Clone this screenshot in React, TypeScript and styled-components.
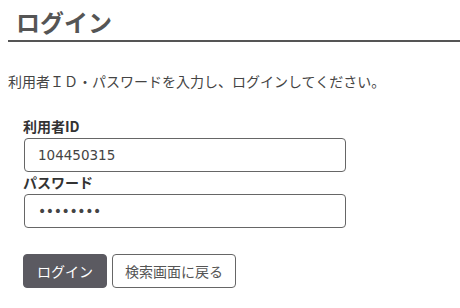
import React from "react";
import styled, { createGlobalStyle } from "styled-components";

const Global = createGlobalStyle`
  html, body { margin: 0; padding: 0; background: #fff; }
  body { font-family: "Noto Sans CJK JP", "Noto Sans", sans-serif; color: #333; }
`;

const Page = styled.div`
  padding: 0 0 0 8px;
`;

const Title = styled.h1`
  margin: 0;
  padding: 7px 0 3px 8px;
  font-size: 24px;
  line-height: 30px;
  font-weight: 700;
  color: #555;
  border-bottom: 2px solid #555;
`;

const Lead = styled.p`
  margin: 29px 0 0;
  font-size: 14px;
  line-height: 20px;
  color: #444;
`;

const Form = styled.form`
  margin-top: 25px;
  padding-left: 15px;
  display: flex;
  flex-direction: column;
`;

const Label = styled.label`
  font-size: 14px;
  line-height: 20px;
  font-weight: 700;
  color: #333;
  margin-bottom: 2px;
`;

const Input = styled.input`
  box-sizing: border-box;
  width: 322px;
  height: 34px;
  margin-left: 1px;
  padding: 0 13px;
  border: 1px solid #666;
  border-radius: 4px;
  font-family: "DejaVu Sans", "Noto Sans CJK JP", sans-serif;
  font-size: 13.5px;
  color: #444;
  outline: none;
  &[type="password"] {
    font-size: 14px;
    letter-spacing: -0.4px;
  }
`;

const Actions = styled.div`
  display: flex;
  gap: 5px;
  margin-top: 26px;
`;

const Button = styled.button<{ $primary?: boolean; $w: number }>`
  box-sizing: border-box;
  width: ${(p) => p.$w}px;
  height: 34px;
  padding: 0;
  border-radius: 4px;
  font-family: "Noto Sans CJK JP", sans-serif;
  font-size: 14px;
  border: 1px solid ${(p) => (p.$primary ? "#5b5a61" : "#666")};
  background: ${(p) => (p.$primary ? "#5b5a61" : "#fff")};
  color: ${(p) => (p.$primary ? "#fff" : "#555")};
  cursor: pointer;
`;

export default function App() {
  return (
    <Page>
      <Global />
      <Title>ログイン</Title>
      <Lead>利用者ＩＤ・パスワードを入力し、ログインしてください。</Lead>
      <Form onSubmit={(e) => e.preventDefault()}>
        <Label>利用者ID</Label>
        <Input type="text" defaultValue="104450315" />
        <Label>パスワード</Label>
        <Input type="password" defaultValue="password" />
        <Actions>
          <Button $primary $w={84}>ログイン</Button>
          <Button $w={124}>検索画面に戻る</Button>
        </Actions>
      </Form>
    </Page>
  );
}
